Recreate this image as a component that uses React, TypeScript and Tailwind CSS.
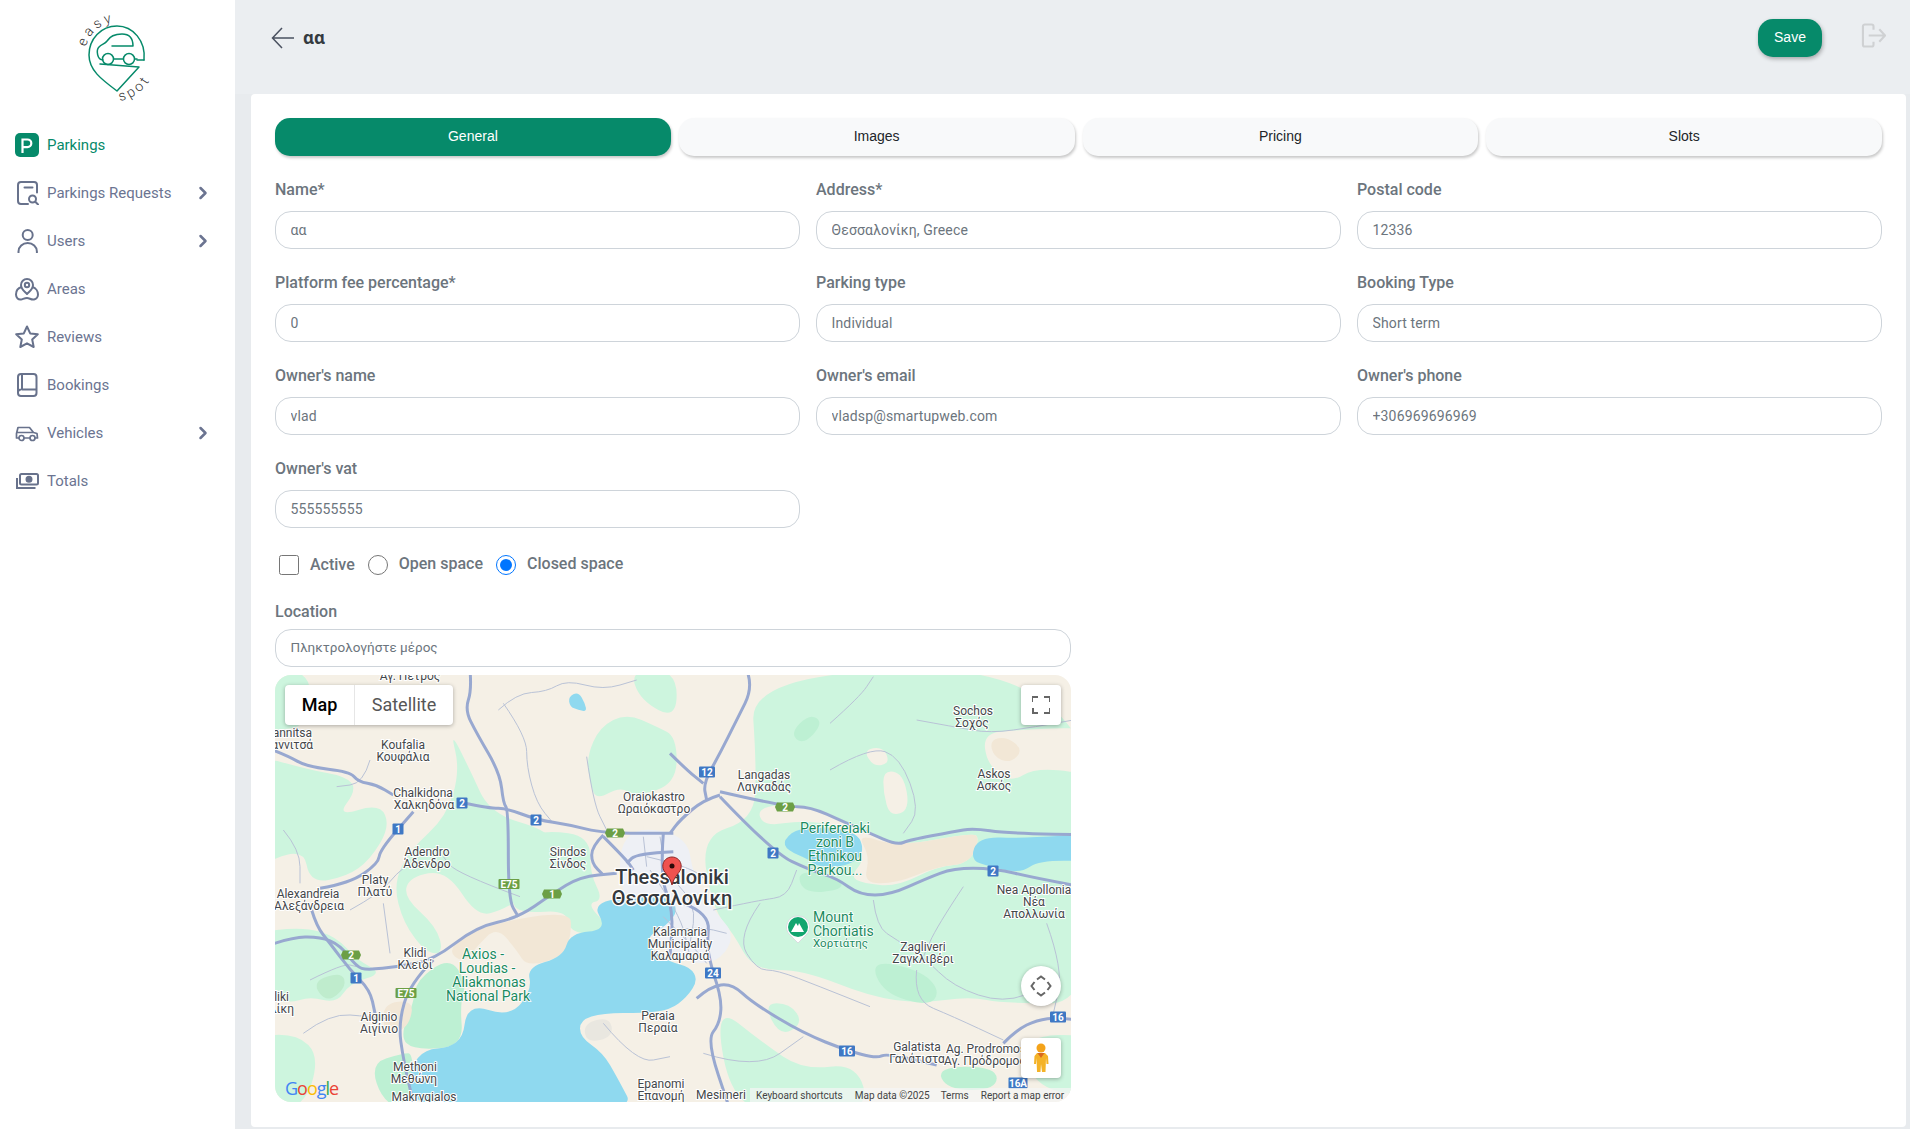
import React from "react";
import { ChevronRight } from "lucide-react";

type Pt = number[];

// map artwork is traced from two crops, so points stay in crop coords
const west = (p: Pt[]) => p.map(([x, y]) => [x / 3 - 5, y / 3 - 5]);
const east = (p: Pt[]) => p.map(([x, y]) => [x / 3 + 395, y / 3 - 5]);

const smooth = (p: Pt[], closed = false) => {
  if (p.length < 3) return `M${p.map((q) => q.join(" ")).join("L")}`;
  const mid = (a: Pt, b: Pt) => [(a[0] + b[0]) / 2, (a[1] + b[1]) / 2];
  if (closed) {
    let d = `M${mid(p[p.length - 1], p[0]).join(" ")}`;
    p.forEach((q, i) => {
      d += `Q${q.join(" ")} ${mid(q, p[(i + 1) % p.length]).join(" ")}`;
    });
    return d + "Z";
  }
  let d = `M${p[0].join(" ")}`;
  for (let i = 1; i < p.length - 1; i++) d += `Q${p[i].join(" ")} ${mid(p[i], p[i + 1]).join(" ")}`;
  return d + `L${p[p.length - 1].join(" ")}`;
};

const LIGHT = "#cdf5de";
const DARK = "#bdf0d3";
const SAND = "#f2e7d6";
const LAND = "#f5f0e6";
const WATER = "#8fd9ef";

const areas: [string, Pt[]][] = [
  [LIGHT, west([[-60, 0], [130, 0], [110, 170], [20, 180], [-60, 190]])],
  [LIGHT, west([[-60, 250], [120, 300], [230, 320], [260, 360], [200, 440], [330, 400], [360, 470], [300, 570], [230, 620], [120, 640], [100, 530], [-60, 600]])],
  [LIGHT, west([[540, 180], [600, 300], [660, 430], [830, 480], [850, 530], [780, 560], [790, 660], [700, 720], [620, 740], [530, 600], [420, 620], [400, 680], [500, 770], [520, 850], [470, 850], [400, 760], [370, 640], [420, 540], [530, 440], [570, 300]])],
  [LIGHT, west([[720, 510], [830, 480], [960, 500], [960, 610], [1000, 690], [950, 700], [1015, 770], [1010, 790], [900, 790], [890, 720], [760, 730], [720, 700]])],
  [LIGHT, west([[950, 260], [990, 170], [1070, 130], [1160, 170], [1220, 200], [1220, 340], [1100, 380], [1050, 350], [980, 390], [960, 340]])],
  [LIGHT, west([[1080, 0], [1220, 0], [1220, 150], [1110, 90]])],
  [LIGHT, west([[-60, 790], [100, 770], [200, 800], [260, 870], [340, 910], [240, 940], [200, 1000], [120, 980], [60, 1000], [-60, 980]])],
  [LIGHT, west([[-60, 1100], [80, 1090], [150, 1160], [100, 1320], [-60, 1320]])],
  ["#bfeccd", west([[125, 935], [215, 905], [230, 950], [170, 1000]])],
  [DARK, west([[440, 930], [540, 860], [590, 940], [570, 1000], [580, 1130], [430, 1140], [390, 1100], [430, 1000]])],
  [DARK, west([[300, 1180], [400, 1150], [430, 1150], [430, 1320], [340, 1300]])],
  [SAND, west([[530, 840], [620, 770], [900, 720], [905, 790], [880, 860], [770, 890], [740, 840], [680, 770], [620, 830], [580, 880]])],
  [SAND, west([[340, 1000], [430, 990], [420, 1060], [380, 1090], [340, 1080]])],
  [LIGHT, east([[240, 0], [1290, 0], [1290, 1000], [1000, 1000], [900, 980], [750, 1000], [600, 980], [400, 900], [250, 900], [190, 790], [130, 720], [90, 500], [250, 450], [260, 300]])],
  [LIGHT, east([[130, 1000], [280, 1120], [400, 1200], [560, 1180], [600, 1320], [400, 1320], [190, 1320]])],
  [LAND, east([[260, 410], [400, 400], [520, 450], [600, 490], [680, 530], [900, 490], [930, 500], [900, 580], [800, 590], [680, 650], [580, 640], [540, 620], [590, 560], [520, 470], [400, 450], [280, 470]])],
  [SAND, east([[560, 490], [680, 530], [900, 490], [930, 500], [900, 580], [800, 590], [680, 640], [580, 640], [600, 560]])],
  [LAND, east([[940, 190], [1040, 180], [1300, 170], [1300, 320], [1100, 290], [1020, 340], [950, 280]])],
  [SAND, east([[960, 210], [1010, 200], [1060, 240], [1020, 280], [970, 260]])],
  [LAND, east([[640, 300], [700, 310], [720, 420], [660, 440], [640, 370]])],
  [LAND, east([[580, 240], [640, 230], [660, 280], [610, 290]])],
  [DARK, east([[360, 190], [420, 130], [460, 160], [400, 225]])],
  [DARK, east([[600, 870], [750, 900], [810, 960], [780, 1010], [640, 970]])],
  [DARK, east([[800, 1190], [980, 1190], [980, 1260], [830, 1260]])],
  [LIGHT, east([[1040, 1100], [1290, 1090], [1290, 1280], [1100, 1260]])],
  [LIGHT, east([[280, 1000], [360, 1000], [400, 1060], [330, 1100]])],
  [DARK, east([[380, 600], [510, 620], [520, 660], [400, 670]])],
  ["#eef0f5", east([[-150, 470], [50, 490], [70, 620], [130, 720], [200, 800], [130, 890], [0, 860], [-150, 700]])],
  ["#e9e7e0", west([[940, 1060], [1020, 1040], [1030, 1100], [950, 1120]])],
];

const waters: Pt[][] = [
  [[395, 220], [315, 225], [333, 255], [295, 258], [288, 282], [252, 292], [257, 315], [235, 342], [192, 328], [187, 372], [138, 375], [130, 440], [362, 440], [342, 402], [328, 378], [305, 362], [305, 345], [328, 338], [368, 338], [395, 335], [412, 322], [423, 305], [415, 292], [395, 287], [376, 275], [372, 262], [392, 250], [403, 236]],
  east([[340, 510], [390, 470], [560, 480], [585, 550], [530, 590], [440, 590], [420, 570], [350, 540]]),
  east([[900, 570], [925, 500], [1060, 505], [1290, 490], [1290, 575], [1110, 570], [1050, 610], [960, 590]]),
  west([[895, 80], [925, 65], [945, 100], [950, 125], [925, 120], [900, 110]]),
];

const motorways: Pt[][] = [
  west([[-30, 225], [50, 255], [110, 290], [240, 305], [265, 335], [320, 345], [370, 375]]),
  west([[150, 655], [240, 640], [325, 580], [330, 540], [430, 425]]),
  west([[-30, 835], [60, 802], [150, 800], [210, 825], [260, 890], [290, 900], [385, 890], [490, 870], [620, 770], [740, 745], [847, 672], [930, 620], [1040, 610]]),
  west([[577, 398], [660, 415], [710, 415], [799, 449], [900, 465], [1000, 490], [1210, 490]]),
  west([[600, 0], [605, 60], [585, 120], [620, 190], [690, 310], [700, 400], [715, 420], [715, 690], [745, 740]]),
  west([[1000, 495], [965, 530], [965, 580], [1000, 615]]),
  west([[1000, 500], [1070, 570], [1090, 600]]),
  west([[1210, 545], [1100, 550], [1070, 580]]),
  west([[125, 720], [140, 770], [180, 820], [240, 900], [300, 960], [315, 1030]]),
  west([[490, 870], [420, 940], [385, 1060], [400, 1170], [435, 1320]]),
  east([[230, 0], [250, 50], [200, 150], [150, 250], [100, 340], [110, 390]]),
  east([[150, 365], [345, 410], [420, 410], [520, 455], [600, 490], [680, 525], [720, 510], [850, 485], [910, 475], [1010, 490], [1290, 495]]),
  east([[150, 375], [100, 390], [30, 450], [0, 490]]),
  east([[150, 380], [310, 548], [420, 600], [500, 625], [570, 675], [660, 675], [770, 625], [850, 595], [970, 595], [1100, 625], [1290, 660]]),
  east([[80, 985], [120, 950], [185, 940], [250, 1000], [400, 1090], [532, 1142], [620, 1165], [650, 1150], [800, 1185]]),
  east([[130, 910], [155, 980], [150, 1060], [110, 1110], [180, 1320]]),
  east([[1000, 1120], [1040, 1080], [1100, 1050], [1165, 1042], [1290, 1060]]),
  east([[0, 250], [50, 300], [100, 340]]),
  east([[-20, 490], [-30, 620], [10, 720], [0, 860]]),
  east([[40, 700], [120, 730], [110, 830], [130, 910]]),
];

const minorRoads: Pt[][] = [
  west([[685, 120], [740, 70], [830, 65], [890, 30], [1000, 60], [1100, 30]]),
  west([[750, 680], [560, 610], [520, 560]]),
  west([[700, 100], [770, 200], [770, 290], [800, 400], [850, 460]]),
  west([[950, 260], [970, 400], [1010, 480]]),
  west([[40, 480], [90, 540], [90, 640]]),
  west([[300, 270], [280, 340], [200, 350]]),
  west([[120, 930], [220, 880], [260, 890]]),
  west([[100, 1090], [180, 1030], [300, 1040], [380, 1050]]),
  west([[240, 720], [330, 670], [380, 610], [420, 580]]),
  west([[340, 700], [360, 850]]),
  west([[1000, 1060], [1100, 1180], [1200, 1160]]),
  west([[1120, 500], [1130, 590]]),
  west([[1170, 500], [1180, 560]]),
  east([[-70, 560], [60, 590], [120, 640]]),
  east([[-60, 600], [30, 730], [60, 860]]),
  east([[20, 640], [80, 700], [60, 820]]),
  east([[0, 780], [90, 770], [170, 790]]),
  east([[-20, 740], [70, 830], [110, 880]]),
  east([[480, 160], [570, 80], [610, 20]]),
  east([[480, 300], [600, 230], [690, 260], [750, 420], [700, 490]]),
  east([[740, 150], [850, 170], [960, 190], [1100, 170], [1210, 150]]),
  east([[610, 690], [620, 770], [680, 810], [760, 860], [850, 950], [1000, 1000], [1130, 950]]),
  east([[130, 720], [270, 690], [350, 680], [380, 600]]),
  east([[270, 700], [200, 800], [260, 900], [320, 900], [450, 950], [600, 1010]]),
  east([[1130, 760], [1180, 900], [1150, 1030]]),
  east([[880, 650], [800, 770], [760, 860]]),
  east([[100, 1150], [260, 1200], [400, 1100]]),
  east([[740, 900], [730, 990], [850, 1040], [1000, 1110]]),
];

const labels: [string, number, number][] = [
  ["Αγ. Πέτρος", 135, 5],
  ["Koufalia", 128, 74],
  ["Κουφάλια", 128, 86],
  ["Chalkidona", 148, 122],
  ["Χαλκηδόνα", 149, 134],
  ["Adendro", 152, 181],
  ["Άδενδρο", 152, 193],
  ["Sindos", 293, 181],
  ["Σίνδος", 293, 193],
  ["Platy", 100, 209],
  ["Πλατύ", 100, 221],
  ["Alexandreia", 33, 223],
  ["Αλεξάνδρεια", 34, 235],
  ["Klidi", 140, 282],
  ["Κλειδί", 140, 294],
  ["Aiginio", 104, 346],
  ["Αιγίνιο", 104, 358],
  ["Methoni", 140, 396],
  ["Μεθώνη", 139, 408],
  ["Makrygialos", 149, 426],
  ["Oraiokastro", 379, 126],
  ["Ωραιόκαστρο", 379, 138],
  ["Kalamaria", 405, 261],
  ["Municipality", 405, 273],
  ["Καλαμαριά", 405, 285],
  ["Peraia", 383, 345],
  ["Περαία", 383, 357],
  ["Epanomi", 386, 413],
  ["Επανομή", 386, 425],
  ["Mesimeri", 446, 424],
  ["Langadas", 489, 104],
  ["Λαγκαδάς", 489, 116],
  ["Sochos", 698, 40],
  ["Σοχός", 697, 52],
  ["Askos", 719, 103],
  ["Ασκός", 719, 115],
  ["Nea Apollonia", 759, 219],
  ["Νέα", 759, 231],
  ["Απολλωνία", 759, 243],
  ["Zagliveri", 648, 276],
  ["Ζαγκλιβέρι", 648, 288],
  ["Galatista", 642, 376],
  ["Γαλάτιστα", 642, 388],
  ["Ag. Prodromos", 711, 378],
  ["Αγ. Πρόδρομος", 710, 390],
];

const parkLabels: [string, number, number][] = [
  ["Axios -", 208, 284],
  ["Loudias -", 212, 298],
  ["Aliakmonas", 214, 312],
  ["National Park", 213, 326],
  ["Perifereiaki", 560, 158],
  ["zoni B", 560, 172],
  ["Ethnikou", 560, 186],
  ["Parkou...", 560, 200],
];

const blueShields: [string, number, number][] = [
  ["2", 187, 128],
  ["1", 123, 154],
  ["2", 261, 145],
  ["1", 81, 303],
  ["12", 432, 97],
  ["2", 498, 178],
  ["2", 718, 196],
  ["24", 438, 298],
  ["16", 572, 376],
  ["16", 783, 342],
  ["16A", 743, 408],
];

const greenShields: [string, number, number][] = [
  ["2", 340, 158],
  ["E75", 234, 209],
  ["1", 277, 219],
  ["2", 76, 280],
  ["E75", 131, 318],
  ["2", 510, 132],
];

const MapCanvas = () => (
  <svg viewBox="0 0 796 427" className="block h-full w-full" style={{ fontFamily: "Roboto, sans-serif" }}>
    <rect width="796" height="427" fill={LAND} />
    {areas.map(([c, p], i) => (
      <path key={i} d={smooth(p, true)} fill={c} />
    ))}
    {waters.map((p, i) => (
      <path key={i} d={smooth(p, true)} fill={WATER} />
    ))}
    {minorRoads.map((p, i) => (
      <path key={i} d={smooth(p)} fill="none" stroke="#b9c2d6" strokeWidth="1" />
    ))}
    {motorways.map((p, i) => (
      <path key={i} d={smooth(p)} fill="none" stroke="#98a8d0" strokeWidth="3" strokeLinejoin="round" />
    ))}
    {blueShields.map(([t, x, y]) => {
      const w = t.length > 2 ? 19 : t.length > 1 ? 16 : 11;
      return (
        <g key={`${t}${x}`}>
          <rect x={x - w / 2} y={y - 5.5} width={w} height="11" rx="1" fill="#3f78c4" />
          <text x={x} y={y + 3.5} textAnchor="middle" fontSize="10" fontWeight="700" fill="#fff">
            {t}
          </text>
        </g>
      );
    })}
    {greenShields.map(([t, x, y]) => (
      <g key={`${t}${x}`}>
        {t.length > 1 ? (
          <rect x={x - 10.5} y={y - 5} width="21" height="10" rx="1" fill="#6c9f45" />
        ) : (
          <path d={`M${x - 10} ${y}l2-4.500h16l2 4.500-2 4.500h-16z`} fill="#6c9f45" />
        )}
        <text x={x} y={y + 3.5} textAnchor="middle" fontSize="10" fontWeight="700" fill="#fff">
          {t}
        </text>
      </g>
    ))}
    <g fontSize="12" fill="#44474a" stroke="#fff" strokeWidth="2" style={{ paintOrder: "stroke" }} textAnchor="middle">
      {labels.map(([t, x, y]) => (
        <text key={t} x={x} y={y}>
          {t}
        </text>
      ))}
      <text x="37" y="62" textAnchor="end">Giannitsa</text>
      <text x="38" y="74" textAnchor="end">Γιαννιτσά</text>
      <text x="14" y="326" textAnchor="end">Meliki</text>
      <text x="19" y="338" textAnchor="end">Μελίκη</text>
    </g>
    <g fontSize="14" fill="#1a8a60" stroke="#fff" strokeWidth="1.5" style={{ paintOrder: "stroke" }} textAnchor="middle">
      {parkLabels.map(([t, x, y]) => (
        <text key={t} x={x} y={y}>
          {t}
        </text>
      ))}
      <text x="538" y="247" textAnchor="start">Mount</text>
      <text x="538" y="261" textAnchor="start">Chortiatis</text>
      <text x="538" y="272" textAnchor="start" fontSize="11.5">Χορτιάτης</text>
    </g>
    <g fontSize="20" fontWeight="500" fill="#35393d" stroke="#fff" strokeWidth="2.5" style={{ paintOrder: "stroke" }} textAnchor="middle">
      <text x="397" y="209">Thessaloniki</text>
      <text x="397" y="230">Θεσσαλονίκη</text>
    </g>
    {/* Chortiatis marker */}
    <path d="M523 241a11 11 0 0 1 8 19l-8 8-8-8a11 11 0 0 1 8-19z" fill="#fff" stroke="#dadce0" strokeWidth="1" />
    <circle cx="523" cy="252" r="10" fill="#12a56f" />
    <path d="M516 257l5-9 2 3 1-3 5 9z" fill="#fff" />
    {/* centre pin */}
    <path d="M397 182c-5.200 0-9.200 4-9.200 9.200 0 6.500 6.700 8.500 9.200 18.800 2.500-10.300 9.200-12.300 9.200-18.800 0-5.200-4-9.200-9.200-9.200z" fill="#f0524f" stroke="#8f2a28" strokeWidth="1" />
    <circle cx="397" cy="191" r="2.500" fill="#2b0a09" />
    <text x="10" y="420" fontFamily="'Open Sans', sans-serif" fontSize="18" fontWeight="500">
      <tspan fill="#4285f4">G</tspan>
      <tspan fill="#ea4335" dx="-1">o</tspan>
      <tspan fill="#fbbc05" dx="-1">o</tspan>
      <tspan fill="#4285f4" dx="-1">g</tspan>
      <tspan fill="#34a853" dx="-1">l</tspan>
      <tspan fill="#ea4335" dx="-1">e</tspan>
    </text>
  </svg>
);

const MapWidget = () => (
  <div className="relative h-[427px] w-[796px] overflow-hidden rounded-2xl">
    <MapCanvas />
    <div className="absolute left-[10px] top-[10px] flex h-10 rounded-sm bg-white text-[18px] shadow-[0_1px_4px_rgba(0,0,0,0.3)]">
      <div className="flex w-[70px] items-center justify-center border-r border-[#e6e6e6] pb-[2px] font-medium text-black">Map</div>
      <div className="flex w-[98px] items-center justify-center pb-[2px] text-[#565656]">Satellite</div>
    </div>
    <div className="absolute left-[746px] top-[10px] flex h-10 w-10 items-center justify-center rounded-sm bg-white shadow-[0_1px_4px_rgba(0,0,0,0.3)]">
      <svg width="18" height="18" viewBox="0 0 18 18" fill="none" stroke="#666" strokeWidth="2">
        <path d="M0 6V1h6M12 1h6v5M18 12v5h-6M6 17H1v-5" />
      </svg>
    </div>
    <div className="absolute left-[746px] top-[291px] flex h-10 w-10 items-center justify-center rounded-full bg-white shadow-[0_1px_4px_rgba(0,0,0,0.3)]">
      <svg width="22" height="22" viewBox="0 0 22 22" fill="none" stroke="#666" strokeWidth="2">
        <path d="M7 4.500l4-3 4 3M7 17.500l4 3 4-3M4.500 7l-3 4 3 4M17.500 7l3 4-3 4" />
      </svg>
    </div>
    <div className="absolute left-[746px] top-[363px] flex h-10 w-10 items-center justify-center rounded-sm bg-white shadow-[0_1px_4px_rgba(0,0,0,0.3)]">
      <svg width="18" height="30" viewBox="0 0 18 30">
        <circle cx="9" cy="5" r="4.500" fill="#f4a31a" />
        <path d="M5 10h8l3 3 .5 8h-2l-.5-6-.5 14h-3.500L9 21l-.500 8H5l-.5-14-.5 6h-2l.5-8z" fill="#f4b328" />
        <path d="M5.500 10L9 15l3.500-5z" fill="#d9691e" />
      </svg>
    </div>
    <div className="absolute bottom-0 right-0 flex h-[14px] w-[321px] items-center bg-[#f5f5f5]/70 text-[10px] text-[#444]">
      <span className="ml-[6px]">Keyboard shortcuts</span>
      <span className="ml-3">Map data ©2025</span>
      <span className="ml-[11px]">Terms</span>
      <span className="ml-3">Report a map error</span>
    </div>
  </div>
);

const Logo = () => (
  <svg width="235" height="121" viewBox="0 0 235 121" fill="none">
    <g stroke="#068a6a" strokeWidth="1.500" strokeLinecap="round" strokeLinejoin="round">
      <path d="M144 60C146 41 133 26 117 26C101 26 89 39 89 55C89 70 101 79 117 91L139 67L100 64" />
      <path d="M144 60H137" />
      <path d="M103 60C97 60 96 50 99 47C102 44 105 44 107 41C110 36 115 34 122 34C129 34 133 38 133 46H112" />
      <circle cx="108" cy="59" r="5.500" />
      <circle cx="129" cy="59" r="5.500" />
      <path d="M114 59H123M135 59H137" />
    </g>
    <path id="logo-top" d="M86 47A33 33 0 0 1 130 24" />
    <path id="logo-bottom" d="M120 101A44 44 0 0 0 156 60" />
    <text fontSize="14" letterSpacing="3" fill="#333" fontFamily="Roboto, sans-serif" fontWeight="300">
      <textPath href="#logo-top">easy</textPath>
    </text>
    <text fontSize="14" letterSpacing="3" fill="#333" fontFamily="Roboto, sans-serif" fontWeight="300">
      <textPath href="#logo-bottom">spot</textPath>
    </text>
  </svg>
);

const navIcon = "h-6 w-6 shrink-0";

const RequestsIcon = () => (
  <svg className={navIcon} viewBox="0 0 24 24" fill="none" stroke="#68728c" strokeWidth="2" strokeLinecap="round">
    <path d="M22 11.500V4a3 3 0 0 0-3-3H6a3 3 0 0 0-3 3v16a3 3 0 0 0 3 3h7" />
    <path d="M9.500 6.500h8" />
    <circle cx="17.500" cy="18" r="3.500" />
    <path d="M20.300 20.800l2.700 2.700" />
  </svg>
);
const UserIcon = () => (
  <svg className={navIcon} viewBox="0 0 24 24" fill="none" stroke="#68728c" strokeWidth="2" strokeLinecap="round">
    <circle cx="12.700" cy="6" r="5" />
    <path d="M3.500 23.500v-1a9.200 8.500 0 0 1 18.400 0v1" />
  </svg>
);
const AreaIcon = () => (
  <svg className={navIcon} viewBox="0 0 24 24" fill="none" stroke="#68728c" strokeWidth="2" strokeLinejoin="round">
    <path d="M12 17c-3-3-6-5-6-9a6 6 0 0 1 12 0c0 4-3 6-6 9z" />
    <circle cx="12" cy="8" r="2.200" />
    <path d="M6.500 10C3 11 1 14 1 17.500 1 21 3.500 23 6 22.500c2-.4 3.500-1.500 6-1.500s4 2 7 1.500c2.500-.5 4-3 4-5 0-3-2-6.500-5.500-7.500" />
  </svg>
);
const StarIcon = () => (
  <svg className={navIcon} viewBox="0 0 24 24" fill="none" stroke="#68728c" strokeWidth="2" strokeLinejoin="round">
    <path d="M12 1.500l3.200 6.900 7.600.9-5.600 5.200 1.500 7.500L12 18.300 5.300 22l1.500-7.500L1.200 9.300l7.600-.9z" />
  </svg>
);
const BookIcon = () => (
  <svg className={navIcon} viewBox="0 0 24 24" fill="none" stroke="#68728c" strokeWidth="2" strokeLinejoin="round">
    <rect x="3" y="1" width="18.500" height="22" rx="3" />
    <path d="M7 1.500V16.500H21.500M3 19.500a3 3 0 0 1 3-3" />
  </svg>
);
const CarIcon = () => (
  <svg className={navIcon} viewBox="0 0 24 24" fill="none" stroke="#68728c" strokeWidth="1.700" strokeLinejoin="round">
    <path d="M4 17H1.500v-4.500L3 6.500h11.500l4 5 3.500 1 .5 4.500H20M15 17H9M18.500 11.500H2" />
    <circle cx="6.500" cy="17" r="2.500" />
    <circle cx="17.500" cy="17" r="2.500" />
  </svg>
);
const CashIcon = () => (
  <svg className={navIcon} viewBox="0 0 24 24" fill="none" stroke="#68728c" strokeWidth="2">
    <rect x="5" y="5" width="18" height="10.500" rx="1.500" />
    <circle cx="14" cy="10.250" r="2.500" fill="#68728c" />
    <path d="M2 9v10h18.500" />
  </svg>
);

const nav = [
  { label: "Parkings Requests", icon: <RequestsIcon />, more: true },
  { label: "Users", icon: <UserIcon />, more: true },
  { label: "Areas", icon: <AreaIcon /> },
  { label: "Reviews", icon: <StarIcon /> },
  { label: "Bookings", icon: <BookIcon /> },
  { label: "Vehicles", icon: <CarIcon />, more: true },
  { label: "Totals", icon: <CashIcon /> },
];

const Sidebar = () => (
  <aside className="h-full w-[235px] shrink-0 bg-white">
    <Logo />
    <div className="flex h-12 items-center gap-2 pl-[15px] text-[15px] text-[#068a6a]">
      <div className="flex h-6 w-6 items-center justify-center rounded-[5px] bg-[#068a6a]">
        <svg width="14" height="15" viewBox="0 0 14 15" fill="none" stroke="#fff" strokeWidth="2.200">
          <path d="M2.500 15V1.500h5a3.800 3.800 0 0 1 0 7.600h-5" />
        </svg>
      </div>
      Parkings
    </div>
    {nav.map((item) => (
      <div key={item.label} className="flex h-12 items-center gap-2 pl-[15px] pr-[22px] text-[15px] text-[#6b7491]">
        {item.icon}
        <span className="flex-1">{item.label}</span>
        {item.more && <ChevronRight className="h-5 w-5" strokeWidth={3} />}
      </div>
    ))}
  </aside>
);

const Field = ({ label, value }: { label: string; value: string }) => (
  <div>
    <label className="block h-6 text-base font-medium leading-6 text-[#6c757d]">{label}</label>
    <input
      readOnly
      value={value}
      className="mt-[9px] block h-[38px] w-full rounded-2xl border border-[#ced4da] bg-white pb-px pl-[14.5px] pr-[15px] text-sm tracking-[0.15px] text-[#6c757d] outline-none"
    />
  </div>
);

const fields = [
  ["Name*", "αα"],
  ["Address*", "Θεσσαλονίκη, Greece"],
  ["Postal code", "12336"],
  ["Platform fee percentage*", "0"],
  ["Parking type", "Individual"],
  ["Booking Type", "Short term"],
  ["Owner's name", "vlad"],
  ["Owner's email", "vladsp@smartupweb.com"],
  ["Owner's phone", "+306969696969"],
  ["Owner's vat", "555555555"],
];

const tabs = ["General", "Images", "Pricing", "Slots"];

export default function App() {
  return (
    <div className="flex h-screen overflow-hidden bg-[#e8ebee] font-[Roboto,sans-serif]">
      <Sidebar />
      <main className="flex min-w-0 flex-1 flex-col pb-[2px]">
        <header className="flex h-[94px] shrink-0 items-start bg-[#ebeef1] pl-[36px] pr-[24px] pt-[19px]">
          <div className="flex h-[38px] flex-1 items-center gap-2">
            <svg width="24" height="24" viewBox="0 0 24 24" fill="none" stroke="#4a5160" strokeWidth="1.500">
              <path d="M23 12H2M11 2L1.500 12 11 22" />
            </svg>
            <span className="font-['Noto_Sans',sans-serif] text-[17px] font-bold text-[#343a40]">αα</span>
          </div>
          <button className="h-[38px] w-16 rounded-[15px] bg-[#068a6a] pb-[2px] font-['Liberation_Sans',sans-serif] text-sm text-white shadow-[1px_2px_4px_rgba(0,0,0,0.3)]">
            Save
          </button>
          <svg className="ml-[39px] mt-[4px]" width="25" height="25" viewBox="0 0 26 26" fill="none" stroke="#cfd1d3" strokeWidth="2.200">
            <path d="M11 1.500H4a2 2 0 0 0-2 2v19a2 2 0 0 0 2 2h7a2 2 0 0 0 2-2v-3M13 7V3.500a2 2 0 0 0-2-2M8 13h17M19 6.500l6 6.500-6 6.500" />
          </svg>
        </header>
        <section className="ml-4 mr-1 flex-1 rounded-[4px] bg-white px-6 pt-6">
          <div className="grid grid-cols-4 gap-2">
            {tabs.map((t, i) => (
              <div
                key={t}
                className={`flex h-[38px] items-center justify-center rounded-[15px] pb-[2px] font-['Liberation_Sans',sans-serif] text-sm shadow-[1px_2px_3px_rgba(0,0,0,0.22)] ${
                  i === 0 ? "bg-[#068a6a] text-white" : "bg-[#f8f9fa] text-[#212529]"
                }`}
              >
                {t}
              </div>
            ))}
          </div>
          <div className="mt-[22px] grid grid-cols-3 gap-x-4 gap-y-[22px]">
            {fields.map(([l, v]) => (
              <Field key={l} label={l} value={v} />
            ))}
          </div>
          <div className="ml-1 mt-[27px] flex h-5 items-center text-base font-medium text-[#6c757d]">
            <input type="checkbox" readOnly className="h-5 w-5" />
            <span className="ml-[11px]">Active</span>
            <input type="radio" readOnly name="space" className="ml-[13px] h-5 w-5" />
            <span className="ml-[11px] -translate-y-px">Open space</span>
            <input type="radio" readOnly checked name="space" className="ml-[13px] h-5 w-5" />
            <span className="ml-[11px] -translate-y-px">Closed space</span>
          </div>
          <div className="mt-[25px] w-[796px]">
            <label className="block h-6 text-base font-medium leading-6 text-[#6c757d]">Location</label>
            <input
              readOnly
              placeholder="Πληκτρολογήστε μέρος"
              className="mt-[5px] block h-[38px] w-full rounded-2xl border border-[#ced4da] bg-white pb-[2px] pl-[14.5px] pr-[15px] text-[13.5px] outline-none placeholder:text-[#6c757d]"
            />
            <div className="mt-2">
              <MapWidget />
            </div>
          </div>
        </section>
      </main>
    </div>
  );
}
